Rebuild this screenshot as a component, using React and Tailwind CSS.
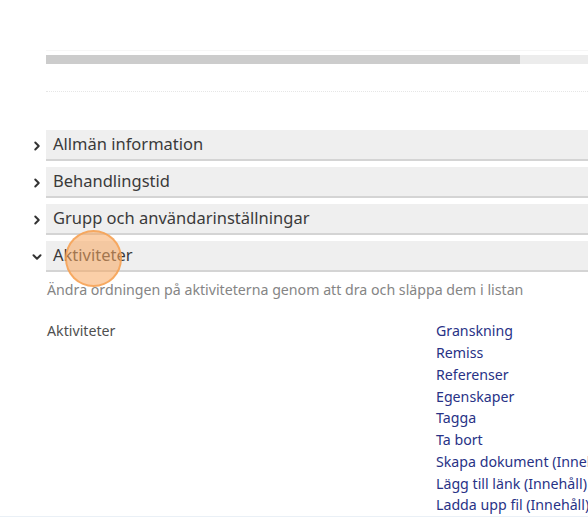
import { ChevronRight, ChevronDown } from "lucide-react";

const SECTIONS = [
  { title: "Allmän information", open: false },
  { title: "Behandlingstid", open: false },
  { title: "Grupp och användarinställningar", open: false },
  { title: "Aktiviteter", open: true },
];

const ACTIVITIES = [
  "Granskning",
  "Remiss",
  "Referenser",
  "Egenskaper",
  "Tagga",
  "Ta bort",
  "Skapa dokument (Innehåll)",
  "Lägg till länk (Innehåll)",
  "Ladda upp fil (Innehåll)",
];

function SectionHeader({ title, open }) {
  return (
    <div className="flex items-center">
      <div className="w-[46px] shrink-0 flex justify-end pr-[2px]">
        {open ? (
          <ChevronDown size={14} strokeWidth={3.4} className="text-[#333]" />
        ) : (
          <ChevronRight size={14} strokeWidth={3.4} className="text-[#333]" />
        )}
      </div>
      <div className="relative flex-1 h-[31px] bg-[#efefef] border-b-2 border-[#d4d4d4] flex items-center pl-[7px] text-[16.5px] text-[#3a3a3a]">
        {title}
        {open && (
          <span className="absolute left-[19px] top-[-11px] w-[57px] h-[57px] rounded-full bg-[#f7a860]/55 border-2 border-[#f6a050]/80" />
        )}
      </div>
    </div>
  );
}

export default function App() {
  return (
    <div className="w-[588px] h-[517px] bg-white overflow-hidden font-['Noto_Sans',sans-serif] flex flex-col">
      <div className="pt-[50px] pl-[46px]">
        <div className="h-px bg-[#f6f6f6]" />
        <div className="flex h-[9px] mt-[4px]">
          <div className="w-[474px] bg-[#cccccc]" />
          <div className="flex-1 bg-[#ececec]" />
        </div>
        <div className="mt-[27px] border-t border-dotted border-[#e6e6e6]" />
      </div>

      <div className="mt-[38px] flex flex-col gap-[6px]">
        {SECTIONS.map((s) => (
          <SectionHeader key={s.title} {...s} />
        ))}
      </div>

      <div className="pl-[47px] mt-[7px] text-[14.2px] text-[#858585] whitespace-nowrap">
        Ändra ordningen på aktiviteterna genom att dra och släppa dem i listan
      </div>

      <div className="flex pl-[47px] mt-[20px] text-[14.2px] leading-[21.75px]">
        <div className="w-[389px] shrink-0 text-[#505050]">Aktiviteter</div>
        <div className="flex flex-col text-[#283286] whitespace-nowrap">
          {ACTIVITIES.map((a) => (
            <span key={a}>{a}</span>
          ))}
        </div>
      </div>

      <div className="mt-auto h-[2px] bg-[#eaf0f6]" />
    </div>
  );
}
